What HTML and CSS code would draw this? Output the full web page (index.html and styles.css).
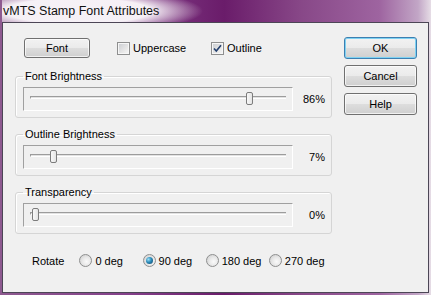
FILE: index.html
```html
<!DOCTYPE html>
<html>
<head>
  <title>vMTS Stamp Font Attributes</title>
  <link rel="stylesheet" href="styles.css">
</head>
<body>
  <div class="window">
    <div class="titlebar">
      <span class="title">vMTS Stamp Font Attributes</span>
    </div>
    <div class="client">
      <div class="main">
        <div class="toprow">
          <div class="btn font-btn">Font</div>
          <label class="check">
            <span class="box"></span>
            <span>Uppercase</span>
          </label>
          <label class="check">
            <span class="box checked">
              <svg width="9" height="9" viewBox="0 0 9 9"><path d="M1 4.5 L3.3 7 L8 1.2" fill="none" stroke="#24406e" stroke-width="1.6"/></svg>
            </span>
            <span>Outline</span>
          </label>
        </div>

        <fieldset class="group">
          <legend>Font Brightness</legend>
          <div class="slider-row">
            <div class="slider">
              <div class="track"></div>
              <div class="thumb" style="left: 222px"></div>
            </div>
            <span class="pct">86%</span>
          </div>
        </fieldset>

        <fieldset class="group">
          <legend>Outline Brightness</legend>
          <div class="slider-row">
            <div class="slider">
              <div class="track"></div>
              <div class="thumb" style="left: 26px"></div>
            </div>
            <span class="pct">7%</span>
          </div>
        </fieldset>

        <fieldset class="group">
          <legend>Transparency</legend>
          <div class="slider-row">
            <div class="slider">
              <div class="track"></div>
              <div class="thumb" style="left: 8px"></div>
            </div>
            <span class="pct">0%</span>
          </div>
        </fieldset>

        <div class="rotate">
          <span class="rotate-label">Rotate</span>
          <label class="radio"><span class="dot"></span>0 deg</label>
          <label class="radio"><span class="dot on"></span>90 deg</label>
          <label class="radio"><span class="dot"></span>180 deg</label>
          <label class="radio"><span class="dot"></span>270 deg</label>
        </div>
      </div>

      <div class="side">
        <div class="btn side-btn default">OK</div>
        <div class="btn side-btn">Cancel</div>
        <div class="btn side-btn">Help</div>
      </div>
    </div>
  </div>
</body>
</html>
```

FILE: styles.css
```css
body {
  margin: 0;
  font-family: "Liberation Sans", Arial, sans-serif;
  font-size: 11px;
  color: #000;
}

.window {
  width: 431px;
  height: 295px;
  box-sizing: border-box;
  padding: 0 2px 2px 2px;
  display: flex;
  flex-direction: column;
  background: linear-gradient(90deg, #8e5a90 0%, #84408a 30%, #6a1c6a 52%, #884888 70%, #9e64a0 88%, #c2a6c6 97%, #e6dde6 100%);
}

.titlebar {
  height: 22px;
  display: flex;
  align-items: center;
  background: radial-gradient(ellipse 125px 22px at 76px 11px, rgba(248, 244, 248, 0.98) 58%, rgba(248, 244, 248, 0) 100%);
}

.title {
  font-size: 12.5px;
  margin-left: 1px;
  color: #111;
}

.client {
  flex: 1;
  background: #f0f0f0;
  border: 1px solid #4c4656;
  display: flex;
  align-items: flex-start;
  padding: 0 11px 0 12px;
}

.main {
  width: 317px;
  margin-top: 15px;
}

.toprow {
  display: flex;
  align-items: center;
  height: 20px;
  padding-left: 9px;
}

.btn {
  box-sizing: border-box;
  height: 20px;
  border: 1px solid #707070;
  border-radius: 3px;
  background: linear-gradient(#f2f2f2 0%, #ebebeb 48%, #dddddd 52%, #cfcfcf 100%);
  box-shadow: inset 0 0 0 1px rgba(255, 255, 255, 0.7);
  display: flex;
  align-items: center;
  justify-content: center;
}

.font-btn {
  width: 66px;
  margin-right: 27px;
}

.check {
  display: flex;
  align-items: center;
  gap: 3px;
  width: 94px;
}

.box {
  width: 13px;
  height: 13px;
  box-sizing: border-box;
  border: 1px solid #8e8f8f;
  box-shadow: inset 0 0 0 1px #f6f6f6;
  background: linear-gradient(135deg, #c9ccd1 0%, #e6e6e6 60%, #f8f8f8 100%);
  display: flex;
  align-items: center;
  justify-content: center;
}

.group {
  margin: 10px 0 0 0;
  padding: 4px 6px 6px 7px;
  border: 1px solid #d5d5d5;
  border-radius: 3px;
  box-shadow: inset 1px 1px 0 #fff;
}

.group:first-of-type {
  margin-top: 12px;
}

.group legend {
  padding: 0 2px;
  margin-left: 0;
  line-height: 13px;
}

.slider-row {
  display: flex;
  align-items: center;
}

.slider {
  position: relative;
  width: 270px;
  height: 24px;
  box-sizing: border-box;
  border-top: 1px solid #a0a0a0;
  border-left: 1px solid #a0a0a0;
  border-right: 1px solid #fff;
  border-bottom: 1px solid #fff;
}

.track {
  margin: 8px 6px 0 6px;
  height: 1px;
  border-top: 1px solid #9c9c9c;
  border-bottom: 1px solid #fff;
  background: #e2e2e2;
  border-left: 1px solid #9c9c9c;
}

.thumb {
  position: absolute;
  top: 4px;
  width: 7px;
  height: 13px;
  box-sizing: border-box;
  border: 1px solid #7c7c7c;
  border-radius: 2px;
  background: linear-gradient(90deg, #f8f8f8, #e4e4e4);
}

.pct {
  flex: 1;
  text-align: right;
}

.rotate {
  display: flex;
  align-items: center;
  margin-top: 20px;
  padding-left: 17px;
}

.rotate-label {
  width: 48px;
}

.radio {
  display: flex;
  align-items: center;
  gap: 3px;
  width: 64px;
}

.dot {
  width: 13px;
  height: 13px;
  box-sizing: border-box;
  border: 1px solid #8e8f8f;
  border-radius: 50%;
  background: radial-gradient(circle at 60% 60%, #fafafa 0%, #e8e8e8 45%, #c8c8c8 100%);
  display: flex;
  align-items: center;
  justify-content: center;
}

.dot.on::before {
  content: "";
  width: 7px;
  height: 7px;
  border-radius: 50%;
  background: radial-gradient(circle at 35% 35%, #9be0f8 0%, #2a8ab8 45%, #0d3e63 100%);
}

.side {
  margin-left: auto;
  margin-top: 14px;
  display: flex;
  flex-direction: column;
  gap: 6px;
}

.side-btn {
  width: 73px;
  height: 22px;
}

.default {
  border-color: #3c7fb1;
  box-shadow: inset 0 0 0 1px #7fd2f2;
}
```
